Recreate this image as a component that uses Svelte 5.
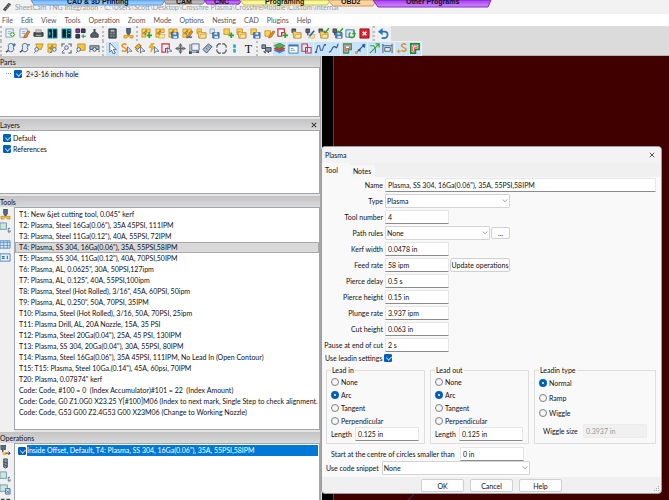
<script>
	// Toolbar glyphs on a 12x12 grid: [path, fill, stroke, stroke width]
	const blocks = [
		['M1 1h4v4H1zM6 1h4v4H6zM1 6h4v4H1z', '#ffd24a', '#b98a1c', 0.8],
		['M3 5l4-2M3 7l3-1', 'none', '#8a6410', 0.8]
	];
	const folder = [
		['M2 4h3l1 1h5v6H3z', '#f6cf6b', '#b3862a', 0.8],
		['M5 7h6l-1 4H4z', '#ffe49a', '#b3862a', 0.5]
	];
	const save = [
		['M4 5h7v6H4z', '#4d83c4', '#2d5486', 0.8],
		['M6 5h3v2H6zM6 9h4v2H6z', '#e6eef8', 'none', 0]
	];
	const plus = [['M9 5v6M6 8h6', 'none', '#35a12a', 2]];
	const pencil = [['M5 11l1-3 4-5 2 1-4 6z', '#e88b25', '#8a4d17', 0.6]];
	const glass = [
		['M4 5a3 3 0 1 0 5 0a3 3 0 1 0-5 0', '#dcecf8', '#52667a', 1],
		['M4 8L1 10', 'none', '#3f5061', 1.6]
	];
	const page = [
		['M1 1h8v9H1z', '#e8f1fb', '#6b8db5', 0.8],
		['M3 4h4M3 6h4', 'none', '#7d9fc5', 0.8]
	];
	const torch = [
		['M4 0h4v5l-1 2H5L4 5z', '#536a82', '#2f3c4a', 0.8],
		['M1 8h10v3H8L6 9 4 11H1z', '#f5bd2c', '#b17c10', 0.6]
	];
	const leads = [['M1 11L3 3l2 0 1 5 2 0L10 2', 'none', '#36598f', 1.1], ['M0 9h2v2H0zM10 1h2v2h-2z', '#36598f', 'none', 0]];
	const redShape = [['M1 1h7v4H5v4H1z', '#fff', '#d8283c', 1.3]];
	const post = [
		['M1 1h4v4H1z', '#5d666f', '#2c3238', 0.8],
		['M3 5v3', 'none', '#3c444c', 1.4]
	];

	const icons = {
		newJob: [...page, ['M8 4a3 3 0 1 0 .1 0', '#3fae3a', '#fff', 0.6], ['M8 5v4M6 7h4', 'none', '#fff', 1]],
		edit: [...page, ...pencil],
		print: [['M1 5h10v4H1z', '#4b5056', '#33373b', 1], ['M3 2h6v3H3z', '#ccd0d4', '#777', 0.6], ['M3 8h6', 'none', '#9bd49a', 1]],
		nestLeft: [['M1 1h10v10H1z', '#0b1b24', '#27b6cc', 1], ['M6 1v10M3 4v4', 'none', '#29c7dc', 1.2]],
		nestRight: [['M1 1h10v10H1z', '#0b1b24', '#27b6cc', 1], ['M6 1v10M8 3h2M8 6h2', 'none', '#29c7dc', 1.2]],
		drill: [['M1 1h4v4H1z', '#7d3c93', '#38234b', 1], ['M7 1h4v4H7zM1 7h4v4H1z', '#36424e', '#1e2a35', 1], ['M7 9h5M9 7v4', 'none', '#3b9840', 1.3]],
		machine: [['M2 10V7l2-2h4l2 2v3z', '#56606c', '#343e48', 1], ['M6 1v5', 'none', '#46525e', 2.4]],
		calc: [['M2 1h8v10H2z', '#4f6172', '#2d3944', 1], ['M4 3h4', 'none', '#c1e0c6', 1.5], ['M4 6h1M7 6h1M4 9h1M7 9h1', 'none', '#d9a448', 1.5]],
		torch,
		partNew: [...blocks, ...plus],
		partOpen: [...blocks, ...folder.slice(1)],
		partSave: [...blocks, ...save],
		partEdit: [...blocks, ...pencil, ['M6 10h5', 'none', '#3464ad', 1.6]],
		open: [['M1 1h5v5H1z', '#ffd24a', '#b98a1c', 0.7], ...folder],
		save: [['M1 1h5v5H1z', '#dce7f1', '#7890a8', 0.7], ...save],
		partAdd: [['M1 1h6v6H1z', '#ffd24a', '#b98a1c', 0.8], ...plus],
		partFolder: [['M1 1h6v6H1z', '#ffd24a', '#b98a1c', 0.8], ...folder],
		partDisk: [['M1 1h6v6H1z', '#ffd24a', '#b98a1c', 0.8], ...save],
		partPencil: [['M1 3h6v6H1z', '#ffd24a', '#b98a1c', 0.8], ...pencil],
		shapeAdd: [...redShape, ...plus],
		postOpen: [...post, ...folder],
		postEdit: [...post, ...folder.slice(1), ['M5 9l5-6', 'none', '#2d63aa', 1.8]],
		postOk: [...post, ...folder, ['M6 3l2 2 4-5', 'none', '#2d9e2d', 1.6]],
		postSave: [...post, ...save, ['M6 3l2 2 4-5', 'none', '#2d9e2d', 1.6]],
		reload: [['M1 2h9v8H1z', '#dbeaf8', '#4075b0', 1], ['M6 5a3 3 0 1 0 4 1M9 3l2 3H8', 'none', '#36a132', 1.4]],
		close: [['M1 1h10v10H1z', '#d9232e', '#8e1a22', 1], ['M4 4l4 4M8 4l-4 4', 'none', '#fff', 1.6]],
		undo: [['M3 4h4a3 3 0 0 1 0 7H4', 'none', '#2376c6', 1.8], ['M5 0v8L0 4z', '#2376c6', 'none', 0]],
		zoomIn: [...glass, ['M10 0v4M8 2h4', 'none', '#2569ad', 1]],
		zoomOut: [...glass, ['M9 2h3', 'none', '#2569ad', 1.2]],
		zoomJob: [['M3 1h8L9 7H5z', '#f5c33c', '#b48316', 0.8], ['M2 7a2 2 0 1 0 4 0a2 2 0 1 0-4 0M3 9l-2 2', '#e3eef8', '#52667a', 1]],
		zoomParts: [...blocks, ['M6 7a2 2 0 1 0 4 0a2 2 0 1 0-4 0M6 9l-3 2', '#e3eef8', '#52667a', 1]],
		zoomFit: [['M1 4V1h3M8 1h3v3M11 8v3H8M4 11H1', 'none', '#4c5966', 1.1], ['M4 5a2 2 0 1 0 4 0a2 2 0 1 0-4 0M4 7L1 10', '#dcecf8', '#52667a', 1]],
		zoomPart: [['M3 1h8v7H3z', '#f5c33c', '#b48316', 0.8], ['M2 7a2 2 0 1 0 4 0a2 2 0 1 0-4 0M3 9l-2 2', '#e3eef8', '#52667a', 1]],
		zoomMachine: [['M1 3h10v4H1z', '#9facb9', '#465361', 1], ['M4 7a2 2 0 1 0 4 0a2 2 0 1 0-4 0M1 8v2M11 8v2', '#e3eef8', '#394857', 1]],
		pointer: [['M3 0v10l2-2 2 4 2-1-2-4h3z', '#fff', '#415a78', 0.9]],
		snap: [['M6 2C4 0 1 1 1 3s5 2 5 4-3 3-5 1', 'none', '#f08a19', 1.6], ['M7 4v7l2-2h3z', '#dcebfa', '#415a78', 0.8]],
		nodes: [['M1 5l4-4 3 2-4 4z', '#f5b428', '#6a4a12', 0.8], ['M7 4v7l2-2h3z', '#dcebfa', '#415a78', 0.8], ['M2 7l3 3', 'none', '#333', 1]],
		bolt: [['M4 0L1 5h3l-1 5 4-6H4l3-4z', '#f7bb22', '#c88b10', 0.6], ['M7 4v7l2-2h3z', '#dcebfa', '#415a78', 0.8]],
		contour: [['M1 1h8v5H5v4H1z', 'none', '#d8283c', 1.2], ['M7 5v6l2-2h3z', '#dcebfa', '#415a78', 0.8]],
		move: [['M6 0l2 3H4zM6 12l2-3H4zM0 6l3-2v4zM12 6L9 4v4z', '#555f68', 'none', 0], ['M6 3v6M3 6h6', 'none', '#555f68', 1.4], ['M4 4h4v4H4z', 'none', '#777', 0.8]],
		crop: [['M3 1h8v7H3z', '#e9f2fb', '#50677e', 1], ['M1 1v9h8', 'none', '#50677e', 1], ['M0 9h3v3H0zM8 9h3v2H8z', '#394d61', 'none', 0]],
		ruler: [['M1 7l6-6 4 3-6 7z', '#a9bace', '#40546b', 1], ['M4 5l2 2M6 3l2 2', 'none', '#40546b', 0.8]],
		box: [['M1 3l2-2h6l2 2v6l-2 2H3L1 9z', '#eef0f2', '#4b555f', 1.2], ['M6 0v2M6 10v2M0 6h2M10 6h2', 'none', '#fff', 1.4]],
		start: [['M5 2h2v3H5zM5 7h2v3H5z', '#22c2cf', '#17a5b2', 0.8]],
		truck: [['M1 2h4v4H1zM5 5h6v4H5z', '#8697a8', '#3b4956', 1], ['M3 9l2 2M8 9v2', 'none', '#3b4956', 1.4]],
		layers: [['M6 5l6 3-6 3-6-3z', '#418bd0', '#2b6aa9', 0.5], ['M6 3l6 3-6 3-6-3z', '#d94242', '#a52d2d', 0.5], ['M6 0l6 3-6 3-6-3z', '#51ad4a', '#357d30', 0.6]],
		panel: [['M1 2h10v9H1z', '#fff', '#3b77b8', 1], ['M1 3h10', 'none', '#3b77b8', 1.6], ['M3 6h3M3 8h5', 'none', '#5a8fc7', 0.9]],
		outline: [['M1 1h6v8H1zM5 5h6v6H5z', '#d9ecfb', '#d8283c', 1.1]],
		leads,
		curve: [['M1 10C5 10 4 3 7 4s2 3 4-3', 'none', '#36598f', 1.3]],
		cutShape: [['M2 1h8v6H7v4H2z', '#ffd7d7', '#38904a', 1.6], ['M4 3h4v3H5v3H4z', '#fff', '#d8283c', 0.8]],
		direction: [['M1 11L11 1', 'none', '#36598f', 1.4], ['M11 1v5L7 2zM6 6v4L3 7z', '#2c5c9e', 'none', 0], ['M0 9h3v3H0z', '#e9a527', 'none', 0]],
		arrows: [['M1 3h4l2 3M1 11L11 1M7 1h4v4M7 6v5', 'none', '#38a13d', 1.3]],
		width: [['M1 1v10M11 1v10M1 3h10', 'none', '#4a5662', 1], ['M3 5h6v4H3z', '#e6edf4', '#4a5662', 1]],
		addStart: [['M1 9h4M3 7v4', 'none', '#f08a19', 1.2], ['M11 2C9 0 6 1 6 3s5 2 5 4-3 3-5 1', 'none', '#f08a19', 1.6]],
		part: [['M2 1h9v6H7v4H2z', '#fff', '#24882c', 1.8], ['M4 3h5v2H6v4H4z', '#fff', '#d8283c', 0.8]],
		sheetG: [['M0 1h7v7H0z', '#cfe9cf', '#6d94bf', 1], ['M11 7H9v4h2V9', 'none', '#4f6479', 0.9]],
		grid: [['M0 2h11v8H0z', '#dceaf8', '#4a85c4', 1], ['M0 4h11M0 7h11M4 2v8M8 2v8', 'none', '#4a85c4', 0.8]],
		list: [['M0 2h11v8H0z', '#e9f2fb', '#4a85c4', 1], ['M2 5h3M2 7h3M8 4v4', 'none', '#3271b5', 1.2]],
		opDrill: [['M4 1h4v9l-2 1-2-1z', '#8996a3', '#34404b', 0.9], ['M4 4l4 2M4 7l4 2', 'none', '#34404b', 1]],
		opCut: [['M1 0h5v5H1z', '#5e6d7c', '#34404b', 0.8], ['M3 5v3', 'none', '#34404b', 1.3], ['M3 8h4v3H3z', '#f5bd2c', 'none', 0], ['M6 9h5M9 7l2 2-2 2', 'none', '#333', 1]],
		opCode: [['M0 1h8v7H0z', '#d1e6d8', '#6d94bf', 1], ['M6 5h5v6H6z', '#c7dcf0', '#3b6798', 0.9], ['M7 7l3 3M10 7l-3 3', 'none', '#3b6798', 0.8]],
		plain: [['M1 2h4v3H1zM7 2h4v3H7z', '#3f474f', 'none', 0]]
	};

	const menus = ['File', 'Edit', 'View', 'Tools', 'Operation', 'Zoom', 'Mode', 'Options', 'Nesting', 'CAD', 'Plugins', 'Help'];

	const bars = [
		[
			{ size: 'seven', items: ['newJob', 'edit', 'print', 'nestLeft', 'nestRight', 'drill', 'machine'] },
			{ size: 'two', items: ['calc', 'torch'] },
			{
				size: 'seventeen',
				items: ['partNew', 'partOpen', 'partSave', 'partEdit', 'open', 'save', 'partAdd', 'partFolder', 'partDisk', 'partPencil', 'shapeAdd', 'postOpen', 'postEdit', 'postOk', 'postSave', 'reload', 'close']
			},
			{ size: 'one', items: ['undo'] }
		],
		[
			{ size: 'seven', items: ['zoomIn', 'zoomOut', 'zoomJob', 'zoomParts', 'zoomFit', 'zoomPart', 'zoomMachine'] },
			{ size: 'eleven', on: ['pointer'], items: ['pointer', 'snap', 'nodes', 'bolt', 'contour', 'move', 'crop', 'ruler', 'box', 'start', 'text'] },
			{
				size: 'twelve',
				on: ['layers', 'panel', 'outline', 'leads', 'curve', 'cutShape', 'direction', 'arrows', 'width', 'addStart', 'part'],
				items: ['truck', 'layers', 'panel', 'outline', 'leads', 'curve', 'cutShape', 'direction', 'arrows', 'width', 'addStart', 'part']
			}
		]
	];

	const tools = [
		'T1: New &jet cutting tool, 0.045" kerf',
		'T2: Plasma, Steel 16Ga(0.06"), 35A 45PSI, 111IPM',
		'T3: Plasma, Steel 11Ga(0.12"), 40A, 55PSI, 72IPM',
		'T4: Plasma, SS 304, 16Ga(0.06"), 35A, 55PSI,58IPM',
		'T5: Plasma, SS 304, 11Ga(0.12"), 40A, 70PSI,50IPM',
		'T6: Plasma, AL, 0.0625", 30A, 50PSI,127ipm',
		'T7: Plasma, AL, 0.125", 40A, 55PSI,100ipm',
		'T8: Plasma, Steel (Hot Rolled), 3/16", 45A, 60PSI, 50ipm',
		'T9: Plasma, AL, 0.250", 50A, 70PSI, 35IPM',
		'T10: Plasma, Steel (Hot Rolled), 3/16, 50A, 70PSI, 25ipm',
		'T11: Plasma Drill, AL, 20A Nozzle, 15A, 35 PSI',
		'T12: Plasma, Steel 20Ga(0.04"), 25A, 45 PSI, 130IPM',
		'T13: Plasma, SS 304, 20Ga(0.04"), 30A, 55PSI, 80IPM',
		'T14: Plasma, Steel 16Ga(0.06"), 35A 45PSI, 111IPM, No Lead In (Open Contour)',
		'T15: T15: Plasma, Steel 10Ga.(0.14"), 45A, 60psi, 70IPM',
		'T20: Plasma, 0.07874" kerf',
		'Code: Code, #100 = 0  (Index Accumulator)#101 = 22  (Index Amount)',
		'Code: Code, G0 Z1.0G0 X23.25 Y[#100]M06 (Index to next mark, Single Step to check alignment...',
		'Code: Code, G53 G00 Z2.4G53 G00 X23M06 (Change to Working Nozzle)'
	];
	let selectedTool = $state(3);

	let layers = $state([
		{ name: 'Default', visible: true },
		{ name: 'References', visible: true }
	]);

	let form = $state({
		name: 'Plasma, SS 304, 16Ga(0.06"), 35A, 55PSI,58IPM',
		number: '4',
		kerf: '0.0478 in',
		feed: '58 ipm',
		delay: '0.5 s',
		pierce: '0.15 in',
		plunge: '3.937 ipm',
		cut: '0.063 in',
		pause: '2 s',
		useLeadin: true,
		start: '0 in',
		wiggle: '0.3937 in'
	});

	const rates = [
		['delay', 'Pierce delay'],
		['pierce', 'Pierce height'],
		['plunge', 'Plunge rate'],
		['cut', 'Cut height'],
		['pause', 'Pause at end of cut']
	];

	const leadKinds = ['None', 'Arc', 'Tangent', 'Perpendicular'];
	let leadGroups = $state([
		{ id: 'in', title: 'Lead in', kind: 'Arc', length: '0.125 in' },
		{ id: 'out', title: 'Lead out', kind: 'Arc', length: '0.125 in' }
	]);
	let leadinType = $state('Normal');
</script>

{#snippet icon(name)}
	<svg class="icon" viewBox="0 0 12 12" aria-hidden="true">
		{#each icons[name] as [d, fill, stroke, width]}
			<path {d} {fill} {stroke} stroke-width={width} />
		{/each}
	</svg>
{/snippet}

{#snippet dropdown(id, value)}
	<span class="dropdown">
		<select {id}><option>{value}</option></select>
		<svg viewBox="0 0 8 8" aria-hidden="true"><path d="M1 2l3 3 3-3" fill="none" stroke="#777" stroke-width="1" /></svg>
	</span>
{/snippet}

<div class="app">
	<header class="titlebar">
		<svg class="logo" viewBox="0 0 12 12" aria-hidden="true">
			<path d="M1 9l7-8 3 2-7 8z" fill="#4a4a4a" />
			<path d="M3 7l3 2M5 5l3 2M7 3l3 2" stroke="#aaa" stroke-width="0.7" />
		</svg>
		<span>SheetCam TNG Integration - C:\Users\Scott\Desktop\Crossfire Plasma\CrossfireModule\Custom\internal</span>
		<svg class="shortcuts" width="500" height="8" viewBox="0 0 500 8">
			<defs>
				<linearGradient id="blue" x2="0" y2="1"><stop stop-color="#6fb5ff" /><stop offset="1" stop-color="#a9d4ff" /></linearGradient>
				<linearGradient id="purple" x2="0" y2="1"><stop stop-color="#a83cf4" /><stop offset="1" stop-color="#d08cff" /></linearGradient>
				<linearGradient id="yellow" x2="0" y2="1"><stop stop-color="#f5f07e" /><stop offset="1" stop-color="#fffcb4" /></linearGradient>
			</defs>
			<path d="M31 0H165l-3 5H34z" fill="url(#blue)" stroke="#6095d4" />
			<path d="M164 0h42l-3 4h-37z" fill="#b9b9b9" stroke="#888" />
			<path d="M204 0h38l-3 4h-32z" fill="url(#purple)" stroke="#7d2ac0" />
			<path d="M240 0h91l-4 5h-83z" fill="url(#yellow)" stroke="#bdb75e" />
			<path d="M328 0h48l-3 6h-40z" fill="#ffd2a0" stroke="#c7995f" />
			<path d="M373 0H491l-3 7H378z" fill="url(#purple)" stroke="#7d2ac0" />
			<g class="shortcut-text">
				<text x="67" y="4">CAD &amp; 3D Printing</text>
				<text x="176" y="4">CAM</text>
				<text x="214" y="4">CNC</text>
				<text x="265" y="4">Programing</text>
				<text x="341" y="4">OBD2</text>
				<text x="406" y="4">Other Programs</text>
			</g>
		</svg>
	</header>

	<nav class="menubar">
		{#each menus as menu}
			<button type="button">{menu}</button>
		{/each}
	</nav>

	<div class="toolbars">
		{#each bars as bar}
			<div class="bar">
				{#each bar as group}
					<div class="group {group.size}">
						{#each group.items as name}
							<button type="button" aria-label={name} class:on={group.on?.includes(name)}>
								{#if name === 'text'}<b>T</b>{:else}{@render icon(name)}{/if}
							</button>
						{/each}
					</div>
				{/each}
			</div>
		{/each}
	</div>

	<main>
		<div class="panels">
			<section>
				<h2>Parts</h2>
				<div class="body parts">
					<label class="tree"><input type="checkbox" checked /><span>2+3-16 inch hole</span></label>
				</div>
			</section>

			<section>
				<h2>Layers <button type="button" aria-label="Close layers">
					<svg viewBox="0 0 8 8"><path d="M1 1l6 6M7 1L1 7" stroke="#222" stroke-width="1.4" /></svg>
				</button></h2>
				<div class="body layers">
					{#each layers as layer}
						<label class="layer"><input type="checkbox" bind:checked={layer.visible} />{layer.name}</label>
					{/each}
				</div>
			</section>

			<section>
				<h2>Tools</h2>
				<div class="split">
					<div class="side tool-side">
						{#each ['torch', 'sheetG', 'grid', 'list'] as name}
							<button type="button" aria-label={name}>{@render icon(name)}</button>
						{/each}
					</div>
					<ul class="body tools">
						{#each tools as tool, i}
							<li><button type="button" class:selected={i === selectedTool} onclick={() => (selectedTool = i)}>{tool}</button></li>
						{/each}
					</ul>
				</div>
			</section>

			<section class="grow">
				<h2>Operations</h2>
				<div class="split">
					<div class="side">
						{#each ['opCut', 'opDrill', 'sheetG', 'opCode', 'plain'] as name}
							<button type="button" aria-label={name}>{@render icon(name)}</button>
						{/each}
					</div>
					<div class="body operations">
						<label><input type="checkbox" checked /><span>Inside Offset, Default, T4: Plasma, SS 304, 16Ga(0.06"), 35A, 55PSI,58IPM</span></label>
					</div>
				</div>
			</section>
		</div>

		<div class="canvas">
			<svg viewBox="0 0 10 8" aria-hidden="true"><path d="M0 8Q4 5 7 0" fill="none" stroke="#35366e" /></svg>
		</div>
	</main>

	<form class="dialog" onsubmit={(e) => e.preventDefault()}>
		<div class="caption">
			<span>Plasma</span>
			<button type="button" aria-label="Close">
				<svg viewBox="0 0 8 8"><path d="M1 1l6 6M7 1L1 7" stroke="#222" stroke-width="1" /></svg>
			</button>
		</div>
		<div class="tabs">
			<button type="button" class="active">Tool</button>
			<button type="button">Notes</button>
		</div>

		<div class="page">
			<div class="fields">
				<label for="name">Name</label>
				<div><input id="name" class="wide" type="text" bind:value={form.name} /></div>
				<label for="type">Type</label>
				<div class="type">{@render dropdown('type', 'Plasma')}</div>
				<label for="number">Tool number</label>
				<div><input id="number" type="text" bind:value={form.number} /></div>
				<label for="rules">Path rules</label>
				<div class="type">{@render dropdown('rules', 'None')}<button type="button" class="more">...</button></div>
				<label for="kerf">Kerf width</label>
				<div><input id="kerf" type="text" bind:value={form.kerf} /></div>
				<label for="feed">Feed rate</label>
				<div class="type"><input id="feed" type="text" bind:value={form.feed} /><button type="button" class="update">Update operations</button></div>
				{#each rates as [key, label]}
					<label for={key}>{label}</label>
					<div><input id={key} type="text" bind:value={form[key]} /></div>
				{/each}
			</div>
			<div class="use">
				<label for="useLeadin">Use leadin settings</label>
				<input id="useLeadin" type="checkbox" bind:checked={form.useLeadin} />
			</div>

			<div class="leads">
				{#each leadGroups as group}
					<fieldset>
						<legend>{group.title}</legend>
						{#each leadKinds as kind}
							<label class="radio"><input type="radio" name={group.id} value={kind} bind:group={group.kind} />{kind}</label>
						{/each}
						<div class="length">
							<label for="length-{group.id}">Length</label>
							<input id="length-{group.id}" type="text" bind:value={group.length} />
						</div>
					</fieldset>
				{/each}
				<fieldset class="leadin">
					<legend>Leadin type</legend>
					{#each ['Normal', 'Ramp', 'Wiggle'] as kind}
						<label class="radio"><input type="radio" name="leadin" value={kind} bind:group={leadinType} />{kind}</label>
					{/each}
					<div class="length">
						<label for="wiggle">Wiggle size</label>
						<input id="wiggle" type="text" value={form.wiggle} disabled />
					</div>
				</fieldset>
			</div>

			<div class="line start">
				<label for="start">Start at the centre of circles smaller than</label>
				<input id="start" type="text" bind:value={form.start} />
			</div>
			<div class="line snippet">
				<label for="snippet">Use code snippet</label>
				{@render dropdown('snippet', 'None')}
			</div>
		</div>

		<footer>
			<button type="submit">OK</button>
			<button type="button">Cancel</button>
			<button type="button">Help</button>
			<svg viewBox="0 0 6 6" aria-hidden="true"><path d="M4 0h1v1H4zM2 2h1v1H2zM4 2h1v1H4zM0 4h1v1H0zM2 4h1v1H2zM4 4h1v1H4z" fill="#aaa" /></svg>
		</footer>
	</form>
</div>

<style>
	:global(body) {
		margin: 0;
		background: #dbdbdb;
	}

	.app {
		position: relative;
		display: flex;
		flex-direction: column;
		height: 100vh;
		overflow: hidden;
		font: 7px/10px Lato, Roboto, sans-serif;
		color: #111;
	}

	.app * {
		box-sizing: border-box;
	}

	button,
	input,
	select {
		margin: 0;
		padding: 0;
		font: inherit;
		color: inherit;
	}

	button {
		border: none;
		background: none;
	}

	/* Title bar and menu */
	.titlebar {
		display: flex;
		align-items: center;
		gap: 3px;
		height: 14px;
		padding-left: 2px;
		overflow: hidden;
		background: #f2f2f2;
		color: #9a9a9a;
		white-space: nowrap;
	}

	.logo {
		width: 10px;
		height: 10px;
	}

	.shortcuts {
		position: absolute;
		top: 0;
		left: 0;
	}

	.shortcut-text {
		font: bold 7px 'Liberation Sans', Arial, sans-serif;
		fill: #111;
	}

	.menubar {
		display: flex;
		gap: 8px;
		height: 12px;
		padding-left: 2px;
		background: #fff;
		color: #555;
	}

	/* Toolbars */
	.toolbars {
		height: 30px;
		background: #dbdbdb;
		border-bottom: 1px solid #b4b4b4;
	}

	.bar {
		display: flex;
		height: 15px;
	}

	.group {
		display: flex;
		justify-content: space-between;
		align-items: center;
		padding: 0 1px 0 2px;
		border-left: 2px dotted #bdbdbd;
		background: #f0f0f0;
	}

	.group button {
		display: flex;
		justify-content: center;
		align-items: center;
		width: 13px;
		height: 14px;
	}

	.group .on {
		background: #c8e4fa;
	}

	.group b {
		font: 12px/14px 'Liberation Serif', serif;
	}

	.seven {
		width: 102px;
	}

	.two {
		width: 34px;
	}

	.seventeen {
		width: 236px;
	}

	.one {
		width: 18px;
		margin-left: 1px;
	}

	.eleven {
		width: 154px;
	}

	.twelve {
		width: 166px;
	}

	.icon {
		display: block;
		width: 11px;
		height: 11px;
	}

	/* Left panels */
	main {
		display: flex;
		flex: 1;
		min-height: 0;
	}

	.panels {
		display: flex;
		flex-direction: column;
		gap: 2px;
		width: 48%;
		min-width: 320px;
		border-right: 1px solid #a5a5a5;
		background: #e4e4e4;
	}

	.grow {
		flex: 1;
	}

	h2 {
		display: flex;
		justify-content: space-between;
		align-items: center;
		height: 11px;
		margin: 0;
		padding-right: 3px;
		background: linear-gradient(#c3c3c3, #d9d9d9);
		font: inherit;
	}

	h2 svg,
	.caption svg {
		display: block;
		width: 6px;
		height: 6px;
	}

	.body {
		border: 1px solid #a0a6ac;
		border-left: none;
		background: #fff;
	}

	.parts {
		height: 50px;
	}

	.layers {
		height: 64px;
		padding: 1px 3px;
	}

	.tree,
	.layer,
	.operations label {
		display: flex;
		align-items: center;
		gap: 2px;
		height: 11px;
	}

	.tree {
		gap: 3px;
		padding-left: 6px;
	}

	.tree::before {
		content: '';
		width: 5px;
		border-top: 1px dotted #999;
	}

	.tree span {
		padding: 0 1px;
		background: #f2f2f2;
	}

	.split {
		display: flex;
		height: 100%;
	}

	.side {
		display: flex;
		flex-direction: column;
		gap: 2px;
		width: 14px;
		padding-top: 2px;
		background: #f0f0f0;
	}

	.side button {
		height: 11px;
	}

	.tool-side button:nth-child(3) {
		margin-top: 4px;
	}

	.split .body {
		flex: 1;
		min-width: 0;
		margin: 0;
		border-left: 1px solid #a0a6ac;
	}

	.tools {
		height: 223px;
		padding: 1px 0 0;
		list-style: none;
	}

	.tools button {
		display: block;
		width: 100%;
		height: 11px;
		padding-left: 3px;
		border: 1px solid transparent;
		line-height: 9px;
		text-align: left;
		white-space: pre;
		overflow: hidden;
	}

	.tools .selected {
		border-color: #a9a9a9;
		background: #d9d9d9;
	}

	.operations {
		padding: 1px 1px 0 3px;
	}

	.operations label {
		gap: 1px;
	}

	.operations span {
		flex: 1;
		height: 11px;
		background: #0078d7;
		color: #fff;
	}

	/* Drawing area */
	.canvas {
		position: relative;
		flex: 1;
		margin-left: 1px;
		border-left: 11px solid #000;
		background: #400000;
		box-shadow: inset 1px 0 #c01818;
	}

	.canvas svg {
		position: absolute;
		bottom: 0;
		left: 75px;
		width: 10px;
		height: 8px;
	}

	/* Form controls */
	input[type='checkbox'] {
		position: relative;
		flex: none;
		appearance: none;
		width: 8px;
		height: 8px;
		border: 1px solid #777;
		border-radius: 1px;
	}

	input[type='checkbox']:checked {
		border-color: #005fb8;
		background: #005fb8;
	}

	input[type='checkbox']:checked::after {
		content: '';
		position: absolute;
		top: 0;
		left: 2px;
		width: 3px;
		height: 4px;
		border: solid #b9d4ee;
		border-width: 0 1px 1px 0;
		transform: rotate(45deg);
	}

	input[type='radio'] {
		flex: none;
		appearance: none;
		width: 8px;
		height: 8px;
		border: 1px solid #808080;
		border-radius: 50%;
		background: #f6f6f6;
	}

	input[type='radio']:checked {
		border: 3px solid #005fb8;
		background: #fff;
	}

	input[type='text'] {
		width: 64px;
		height: 14px;
		padding: 0 2px;
		border: 1px solid #e6e6e6;
		border-bottom-color: #8b8b8b;
		border-radius: 1px;
		background: #fff;
	}

	input[type='text']:disabled {
		border-color: #ececec;
		background: #f0f0f0;
		color: #999;
	}

	input[type='text'].wide {
		width: 100%;
	}

	.dropdown {
		position: relative;
		flex: 1;
		display: flex;
	}

	.dropdown select {
		appearance: none;
		width: 100%;
		height: 14px;
		padding: 0 1px;
		border: 1px solid #d4d4d4;
		border-radius: 1px;
		background: #fff;
	}

	.dropdown svg {
		position: absolute;
		top: 4px;
		right: 2px;
		width: 6px;
		height: 6px;
		pointer-events: none;
	}

	/* Dialog */
	.dialog {
		position: absolute;
		top: 146px;
		left: 321px;
		right: 7px;
		overflow: hidden;
		border: 1px solid #9c9c9c;
		border-radius: 4px;
		background: #f0f0f0;
	}

	.caption {
		display: flex;
		justify-content: space-between;
		align-items: center;
		height: 16px;
		padding: 0 6px 0 3px;
		background: #f3f3f3;
	}

	.tabs {
		display: flex;
		align-items: flex-end;
		height: 14px;
	}

	.tabs button {
		height: 12px;
		padding: 0 4px 0 3px;
		background: #f7f7f7;
	}

	.tabs .active {
		height: 14px;
		padding: 0 12px 1px 3px;
		background: #f9f9f9;
	}

	.page {
		padding: 1px 5px 2px 1px;
		background: #f9f9f9;
	}

	.fields {
		display: grid;
		grid-template-columns: 60px 1fr;
		align-items: center;
		gap: 2px;
		white-space: nowrap;
	}

	.fields label {
		text-align: right;
	}

	.fields div {
		display: flex;
		gap: 1px;
	}

	.fields .type {
		width: 125px;
	}

	.more,
	.update,
	footer button {
		border: 1px solid #d0d0d0;
		border-radius: 2px;
		background: #fdfdfd;
		white-space: nowrap;
	}

	.more {
		width: 19px;
		margin: 1px 0;
	}

	.update {
		flex: 1;
	}

	.use {
		display: flex;
		align-items: center;
		gap: 2px;
		height: 11px;
		padding-left: 2px;
	}

	.leads {
		display: grid;
		grid-template-columns: 99px 99px 1fr;
		gap: 5px;
		margin: 2px 0 3px 3px;
	}

	fieldset {
		min-width: 0;
		margin: 0;
		padding: 0 5px 2px 4px;
		border: 1px solid #dedede;
	}

	legend {
		padding: 0 1px;
	}

	.radio {
		display: flex;
		align-items: center;
		gap: 2px;
		height: 13px;
	}

	.leadin .radio {
		height: 15px;
	}

	.length {
		display: flex;
		justify-content: space-between;
		align-items: center;
	}

	.leadin .length {
		padding: 4px 3px 0 4px;
	}

	.line {
		display: flex;
		align-items: center;
		justify-content: space-between;
	}

	.start {
		width: 201px;
		padding-left: 8px;
	}

	.snippet {
		gap: 3px;
		width: 207px;
		padding-left: 3px;
	}

	footer {
		display: flex;
		justify-content: center;
		gap: 6px;
		position: relative;
		padding: 2px 0 1px;
	}

	footer button {
		width: 43px;
		height: 13px;
	}

	footer svg {
		position: absolute;
		right: 1px;
		bottom: 1px;
		width: 6px;
		height: 6px;
	}
</style>
